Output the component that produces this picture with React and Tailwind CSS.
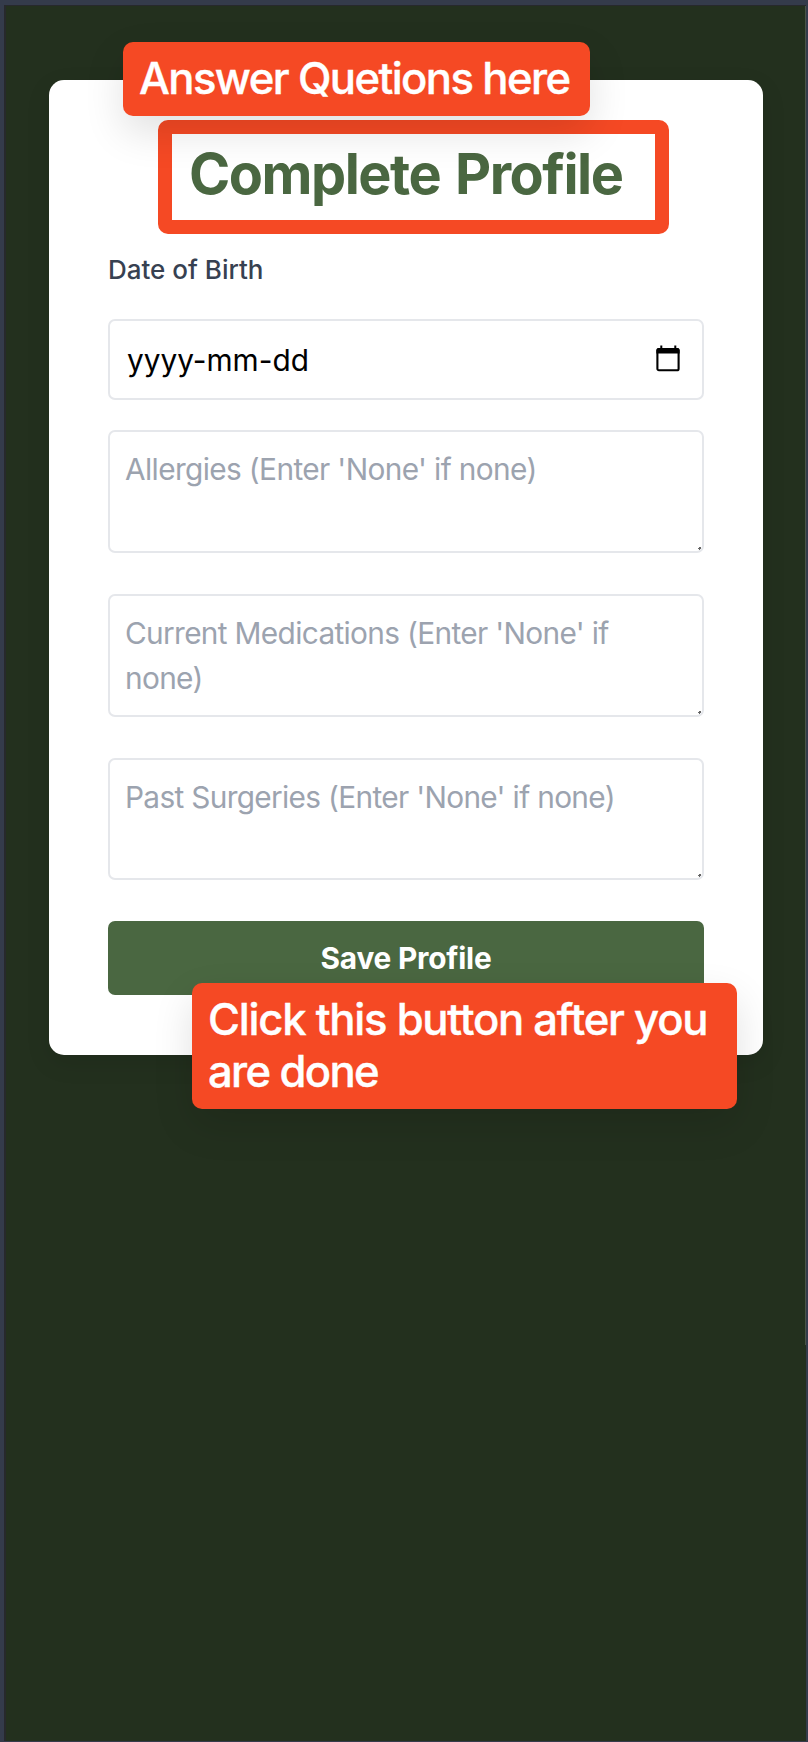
const fields = [
  { placeholder: "Allergies (Enter 'None' if none)", spacing: 'tracking-[-0.62px]' },
  { placeholder: "Current Medications (Enter 'None' if none)", spacing: 'tracking-[-0.66px]' },
  { placeholder: "Past Surgeries (Enter 'None' if none)", spacing: 'tracking-[-0.67px]' },
];

function CalendarIcon() {
  return (
    <svg className="-mt-[2px] h-[27px] w-6" viewBox="0 0 24 27" fill="none">
      <rect x="1.4" y="4" width="21.2" height="21.3" rx="1.6" stroke="#000" strokeWidth="2.1" />
      <path d="M0.4 5.2a2.3 2.3 0 0 1 2.3-2.3h1.6V0.5h2v2.4h12v-2.4h2v2.4h1A2.3 2.3 0 0 1 23.6 5.2V8.4H0.4Z" fill="#000" />
    </svg>
  );
}

function TextField({ placeholder, spacing }) {
  return (
    <div className="relative h-[122.8px]">
      <textarea
        placeholder={placeholder}
        className={`block h-full w-full resize-none overflow-hidden rounded-[7px] border-2 border-[#e5e7eb] bg-white px-[15px] pt-[15px] text-[29.8px] leading-[45px] text-black outline-none placeholder:text-[#9ca3af] ${spacing}`}
      />
      <svg className="absolute right-[3px] bottom-[3px] h-[3px] w-[3px]" viewBox="0 0 3 3">
        <path d="M1 0h2v2h-1v1h-1v-1h-1v-1h1z" fill="#666" />
      </svg>
    </div>
  );
}

export default function App() {
  return (
    <div className="h-[1742px] w-[808px] overflow-hidden bg-[#343b4b] pt-[5px] pr-[2px] pb-px pl-1 font-['Inter',sans-serif]">
      <div className="relative h-full border-t border-l-2 border-[#27292c] bg-[#23301e]">
        <div className="absolute top-0 right-0 h-[1339px] w-px bg-[#4a5547]" />
        <div className="px-[43px] pt-[74px] pr-[43px]">
          <main className="relative h-[975px] w-[714px] rounded-[15px] bg-white px-[59px] pt-[58px] shadow-[0_8px_24px_rgba(0,0,0,0.1)]">
            <h1 className="ml-[81px] h-[72px] text-[55.8px] leading-[72px] font-bold whitespace-nowrap text-[#4a6741] tracking-[-1.48px] [word-spacing:3px]">Complete Profile</h1>
            <label className="mt-[40px] block h-[40px] text-[26px] leading-[40px] font-medium whitespace-nowrap text-[#374151]">Date of Birth</label>
            <div className="mt-[29px] flex h-[81px] items-center justify-between rounded-[7px] border-2 border-[#e5e7eb] pr-[22px] pl-[17px]">
              <span className="pt-[2px] text-[29.8px] leading-[45px] whitespace-nowrap text-black">yyyy-mm-dd</span>
              <CalendarIcon />
            </div>
            <div className="mt-[30px] flex flex-col gap-[41px]">
              {fields.map((f) => (
                <TextField key={f.placeholder} {...f} />
              ))}
            </div>
            <button className="mt-[40.6px] block h-[74.5px] w-full rounded-[7px] bg-[#4a6741] text-[29.8px] leading-[45px] font-bold whitespace-nowrap text-white tracking-[-0.2px]">Save Profile</button>
          </main>
        </div>
        <div className="absolute top-[114px] left-[152px] h-[114px] w-[511px] rounded-[10px] border-[14px] border-[#f54924]" />
        <div className="absolute top-[36px] left-[117px] h-[74px] w-[467px] rounded-[10px] bg-[#f54924] pt-[11px] pl-[16px] text-[43.6px] leading-[52px] font-medium whitespace-nowrap text-white tracking-[-1.6px] [-webkit-text-stroke:0.4px_white] shadow-[0_16px_40px_rgba(0,0,0,0.12)]">Answer Quetions here</div>
        <div className="absolute top-[977px] left-[186px] h-[126px] w-[545px] rounded-[10px] bg-[#f54924] pt-[11px] pl-[16px] text-[43.6px] leading-[52px] font-medium whitespace-nowrap text-white [-webkit-text-stroke:0.4px_white] shadow-[0_16px_40px_rgba(0,0,0,0.12)]">
          <div className="tracking-[-1.24px]">Click this button after you</div>
          <div className="tracking-[-1.65px]">are done</div>
        </div>
      </div>
    </div>
  );
}
